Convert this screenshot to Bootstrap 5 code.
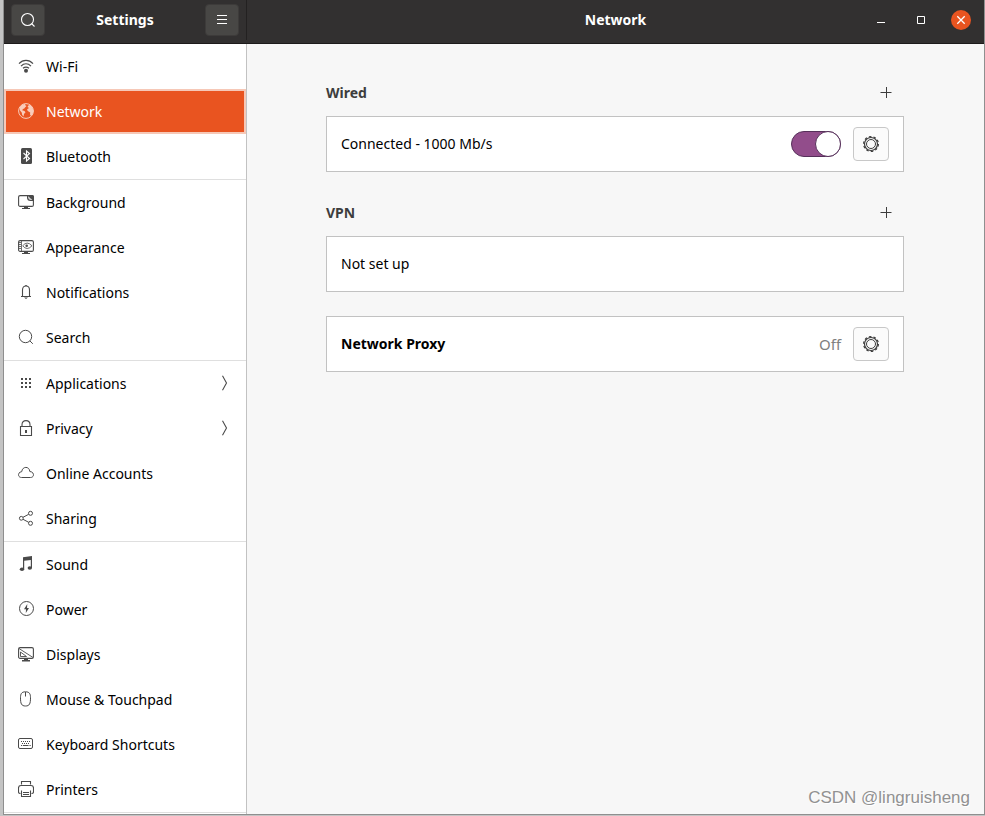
<!DOCTYPE html>
<html lang="en">
<head>
<meta charset="utf-8">
<meta name="viewport" content="width=device-width, initial-scale=1">
<title>Settings</title>
<link href="https://cdn.jsdelivr.net/npm/bootstrap@5.3.0/dist/css/bootstrap.min.css" rel="stylesheet">
<style>
  body { font-family: "Noto Sans", sans-serif; font-size: 14px; line-height: 20px; color: #000; background: #c4c4c4; }
  svg { display: block; flex-shrink: 0; }
  .desktop { padding: 0 1px 2px 4px; }
  .app-window { background: #f7f7f7; box-shadow: 0 0 0 1px #8f8f8f; }
  .titlebar { height: 44px; background: #323030; border-bottom: 1px solid #1d1b1b; color: #fff; padding-bottom: 3px; }
  .titlebar h1, .panel h2 { font-size: 14px; line-height: 20px; font-weight: 700; }
  .side { width: 243px; border-right: 1px solid #c2c2c2; }
  .titlebar .side { border-right-color: #232121; padding: 0 7px; }
  .tool-btn { width: 34px; height: 32px; background: #484745; border: 1px solid #3d3b3a; border-radius: 4px; color: #fff; }
  .win-controls { padding-right: 3px; }
  .win-btn { width: 40px; height: 40px; color: #fff; }
  .close-dot { width: 20px; height: 20px; background: #e95420; }
  .side-row { height: 45px; padding: 0 18px 1px 14px; gap: 12px; color: #000; text-decoration: none; }
  .side-row span { padding-top: 2px; }
  .side-row svg { color: #4a4a4a; }
  .side-row.current { background: #e95420; color: #fff; border: 2px solid #f6c8b7; padding: 0 16px 1px 12px; }
  .side-row.current svg { color: #f9cdbb; }
  .side-row.group-end { height: 46px; border-bottom: 1px solid #dfdfdf; }
  .panel { padding: 25px 80px 24px 79px; }
  .section-head { height: 47px; color: #3d3d3d; }
  .vpn { margin-top: 17px; }
  .add-btn { width: 36px; height: 35px; color: #3d3d3d; }
  .setting { height: 56px; padding: 0 14px; background: #fff; border: 1px solid #c2c2c2; gap: 12px; }
  .state { color: #808080; font-size: 15px; }
  .gear-btn { width: 36px; height: 34px; background: #fbfbfb; border: 1px solid #c8c8c8; border-radius: 4px; color: #3d3d3d; }
  .toggle { appearance: none; width: 50px; height: 26px; border-radius: 13px; background: #924d8b; border: 1px solid #56305a; display: flex; justify-content: flex-end; cursor: pointer; }
  .toggle::before { content: ""; width: 26px; height: 26px; margin: -1px -1px 0 0; border-radius: 50%; background: #fff; border: 1px solid #56305a; }
  .toggle:not(:checked) { background: #ddd; justify-content: flex-start; }
  .watermark { right: 14px; bottom: 6px; font: 17px/20px "Liberation Sans", sans-serif; color: #919191; text-shadow: 1px 1px 0 #fff; }
</style>
<script src="https://cdn.jsdelivr.net/npm/bootstrap@5.3.0/dist/js/bootstrap.bundle.min.js"></script>
</head>
<body>
<div class="desktop d-flex min-vh-100">
<div class="app-window d-flex flex-column flex-grow-1 position-relative">
  <header class="titlebar d-flex">
    <div class="side d-flex align-items-center justify-content-between flex-shrink-0">
      <button class="tool-btn d-flex align-items-center justify-content-center p-0" type="button" aria-label="Search settings">
        <svg width="16" height="16" fill="none" stroke="currentColor" stroke-width="1.1"><circle cx="7.5" cy="7.5" r="6"/><path d="M11.5 11.5l3 3"/></svg>
      </button>
      <h1 class="m-0">Settings</h1>
      <button class="tool-btn d-flex align-items-center justify-content-center p-0" type="button" aria-label="Menu">
        <svg width="16" height="16" stroke="currentColor"><path d="M3 3.5h10M3 7.5h10M3 11.5h10"/></svg>
      </button>
    </div>
    <div class="win-controls d-flex flex-grow-1 align-items-center justify-content-end position-relative">
      <h1 class="m-0 position-absolute start-50 translate-middle-x">Network</h1>
      <button class="win-btn btn p-0 border-0 d-flex align-items-center justify-content-center" type="button" aria-label="Minimize"><svg width="10" height="10" stroke="currentColor"><path d="M1 7.500h8"/></svg></button>
      <button class="win-btn btn p-0 border-0 d-flex align-items-center justify-content-center" type="button" aria-label="Maximize"><svg width="10" height="10" fill="none" stroke="currentColor"><path d="M1.500 1.500h7v7h-7z"/></svg></button>
      <button class="win-btn btn p-0 border-0 d-flex align-items-center justify-content-center" type="button" aria-label="Close"><span class="close-dot rounded-circle d-flex align-items-center justify-content-center"><svg width="10" height="10" stroke="currentColor" stroke-width="1.3"><path d="M1.300 1.300l7.400 7.400M8.700 1.300l-7.400 7.400"/></svg></span></button>
    </div>
  </header>

  <div class="d-flex flex-grow-1">
    <nav class="side bg-white flex-shrink-0" aria-label="Settings categories">
      <a href="#" class="side-row d-flex align-items-center">
        <svg width="16" height="16" fill="none" stroke="currentColor" stroke-width="1.200"><path d="M1 5.600C5 1.300 11 1.300 15 5.600M3 8.100c3-3 7-3 10 0M5 10.300c2-1.700 4-1.700 6 0"/><circle cx="8" cy="12.800" r="2" fill="currentColor" stroke="none"/></svg>
        <span>Wi-Fi</span></a>
      <a href="#" class="side-row current d-flex align-items-center" aria-current="page">
        <svg width="16" height="16" fill="none" stroke="currentColor"><circle cx="8" cy="8" r="7.400"/><path fill="currentColor" stroke="none" d="M1.500 4.500L4 1.800 7.500.7 7 2 8.500 3 7 4.500 6.300 5.500 5 6 4.200 7.200 6.500 8 7.500 9.300 6 11 5.500 13.500 4.200 12 3.700 9.500 2 7.500zM9.500 4l1-1.800L12.500 2l2 2.600 1 3.400-.8 3-1.700 2-1-1.500.2-2-1.700-1-1.500-1.500L9.500 6l1.500-1z"/></svg>
        <span>Network</span></a>
      <a href="#" class="side-row group-end d-flex align-items-center">
        <svg width="16" height="16"><rect x="3" width="11" height="16" rx="1.500" fill="currentColor"/><path d="M5.500 5l6 5.500L8.500 13V3l3 2.500-6 5.500" fill="none" stroke="#fff" stroke-width="1.100"/></svg>
        <span>Bluetooth</span></a>

      <a href="#" class="side-row d-flex align-items-center">
        <svg width="16" height="16" fill="none" stroke="currentColor" stroke-width="1.100"><rect x=".6" y="1.600" width="14.800" height="10.800" rx="1.500"/><path d="M9 1h5q2 0 2 2v4h-3.500Q9 7 9 3.500z" fill="currentColor" stroke="none"/><path d="M10.300 2.300v1.200q0 2.300 2.200 2.300h1.800l-1.500-1.300h-1.300V3.200z" fill="#fff" stroke="none"/><path d="M6 12.500h4V14h2v1H4v-1h2z" fill="currentColor" stroke="none"/></svg>
        <span>Background</span></a>
      <a href="#" class="side-row d-flex align-items-center">
        <svg width="16" height="16" fill="none" stroke="currentColor"><rect x=".6" y="1.600" width="14.800" height="10.800" rx="1.500" stroke-width="1.100"/><path d="M3.500 1.500v11M1 3.500h2M1 5.500h2M1 7.500h2M1 9.500h2" stroke-width=".8"/><path d="M4.700 6.800q4.300-5.400 9.300 0-5 5.400-9.300 0z" stroke-width=".8"/><circle cx="8.700" cy="6.800" r="1.300" fill="currentColor" stroke="none"/><path d="M6 12.500h4V14h2v1H4v-1h2z" fill="currentColor" stroke="none"/></svg>
        <span>Appearance</span></a>
      <a href="#" class="side-row d-flex align-items-center">
        <svg width="16" height="16" fill="none" stroke="currentColor" stroke-width="1.100"><path d="M3 12.500h10M4.500 12.300V6q0-4 3.500-4t3.500 4v6.300M7.200 1.500h1.600"/><path d="M6 13.500h4L8 15z" fill="currentColor" stroke="none"/></svg>
        <span>Notifications</span></a>
      <a href="#" class="side-row group-end d-flex align-items-center">
        <svg width="16" height="16" fill="none" stroke="currentColor"><circle cx="7.500" cy="7.500" r="6.200"/><path d="M11.800 11.800l3 3"/></svg>
        <span>Search</span></a>

      <a href="#" class="side-row d-flex align-items-center">
        <svg width="16" height="16" fill="currentColor"><path d="M3 3h2v2H3zM7 3h2v2H7zM11 3h2v2h-2zM3 7h2v2H3zM7 7h2v2H7zM11 7h2v2h-2zM3 11h2v2H3zM7 11h2v2H7zM11 11h2v2h-2z"/></svg>
        <span>Applications</span>
        <svg class="ms-auto" width="7" height="16" fill="none" stroke="currentColor" stroke-width="1.100"><path d="M1.500.8l4 7.200-4 7.200"/></svg></a>
      <a href="#" class="side-row d-flex align-items-center">
        <svg width="16" height="16" fill="none" stroke="currentColor" stroke-width="1.100"><path d="M2.500 6.500h11v9h-11zM4 6.500V4.700C4 2.200 5.500.6 8 .6s4 1.600 4 4.100v1.800"/><path d="M7 10h2v3H7z" fill="currentColor" stroke="none"/></svg>
        <span>Privacy</span>
        <svg class="ms-auto" width="7" height="16" fill="none" stroke="currentColor" stroke-width="1.100"><path d="M1.500.8l4 7.200-4 7.200"/></svg></a>
      <a href="#" class="side-row d-flex align-items-center">
        <svg width="16" height="16" fill="none" stroke="currentColor"><path d="M3.500 12.500C-.5 12.500-.5 7 3.700 6.700 4.300 1 11.500 1 11.800 6.500c4.800.3 4.800 6 .7 6z"/></svg>
        <span>Online Accounts</span></a>
      <a href="#" class="side-row group-end d-flex align-items-center">
        <svg width="16" height="16" fill="none" stroke="currentColor"><circle cx="3.300" cy="8.300" r="1.900"/><circle cx="12.500" cy="3.300" r="2"/><circle cx="12.500" cy="13.300" r="2"/><path d="M5 7.300l5.700-3M5 9.300l5.700 3"/></svg>
        <span>Sharing</span></a>

      <a href="#" class="side-row d-flex align-items-center">
        <svg width="16" height="16" fill="currentColor"><path d="M5 1.300L14 0v12h-1.200V4L6.200 4.800V13H5z"/><ellipse cx="4" cy="13.300" rx="2.200" ry="1.800"/><ellipse cx="11.800" cy="12" rx="2.200" ry="1.800"/></svg>
        <span>Sound</span></a>
      <a href="#" class="side-row d-flex align-items-center">
        <svg width="16" height="16" fill="none" stroke="currentColor"><circle cx="8.500" cy="7.500" r="7"/><path d="M9.300 3L6 8.300h2L7.800 12 11 7H9z" fill="currentColor" stroke="none"/></svg>
        <span>Power</span></a>
      <a href="#" class="side-row d-flex align-items-center">
        <svg width="16" height="16" fill="none" stroke="currentColor"><rect x=".6" y="1.600" width="14.800" height="10.800" rx="1.500" stroke-width="1.100"/><path d="M1 2.500l14 9M2.500 6v4.500h6z" stroke-width=".9"/><path d="M6 12.500h4V14h2v1.500H4V14h2z" fill="currentColor" stroke="none"/></svg>
        <span>Displays</span></a>
      <a href="#" class="side-row d-flex align-items-center">
        <svg width="16" height="16" fill="none" stroke="currentColor"><path d="M7.500.8c4 0 5 2 5 6 0 6-1 8.200-5 8.200s-5-2.200-5-8.200c0-4 1-6 5-6zM7.500 1v4.500"/></svg>
        <span>Mouse &amp; Touchpad</span></a>
      <a href="#" class="side-row d-flex align-items-center">
        <svg width="16" height="16" fill="none" stroke="currentColor"><rect x=".5" y="2.500" width="14" height="10" rx="1.500"/><path d="M3 5.500h10M4 7.500h8" stroke-dasharray="1 1"/><path d="M3 9.500h1.200M5 9.500h5.500M11.500 9.500h1.200"/></svg>
        <span>Keyboard Shortcuts</span></a>
      <a href="#" class="side-row group-end d-flex align-items-center">
        <svg width="16" height="16" fill="none" stroke="currentColor" stroke-width="1.100"><path d="M3.500 3.500v-3h9v3M2.500 12.500Q.5 12.500.5 11V7q0-2.500 2.500-2.500h10q2.500 0 2.500 2.500v4q0 1.500-2 1.500M3.500 9.500v6h9v-6M5 11.500h6M5 13.500h6"/></svg>
        <span>Printers</span></a>
    </nav>

    <main class="panel flex-grow-1">
      <section>
        <div class="section-head d-flex align-items-center justify-content-between">
          <h2 class="m-0">Wired</h2>
          <button class="add-btn btn p-0 border-0 d-flex align-items-center justify-content-center" type="button" aria-label="Add wired connection"><svg width="12" height="13" stroke="currentColor"><path d="M.5 6.500h11M6.500 1v11"/></svg></button>
        </div>
        <div class="setting d-flex align-items-center">
          <label class="flex-grow-1" for="wired">Connected - 1000 Mb/s</label>
          <input class="toggle m-0" type="checkbox" role="switch" id="wired" checked>
          <button class="gear-btn d-flex align-items-center justify-content-center p-0" type="button" aria-label="Wired options">
            <svg width="16" height="16" fill="none" stroke="currentColor"><circle cx="8" cy="8" r="4.500"/><circle cx="8" cy="8" r="6.500" stroke-width="1.200"/><circle cx="8" cy="8" r="7.400" stroke-width="1.200" stroke-dasharray="2.500 2.150"/></svg>
          </button>
        </div>
      </section>
      <section class="vpn">
        <div class="section-head d-flex align-items-center justify-content-between">
          <h2 class="m-0">VPN</h2>
          <button class="add-btn btn p-0 border-0 d-flex align-items-center justify-content-center" type="button" aria-label="Add VPN"><svg width="12" height="13" stroke="currentColor"><path d="M.5 6.500h11M6.500 1v11"/></svg></button>
        </div>
        <div class="setting d-flex align-items-center">Not set up</div>
      </section>
      <section class="setting d-flex align-items-center mt-4">
        <h2 class="m-0 flex-grow-1">Network Proxy</h2>
        <span class="state">Off</span>
        <button class="gear-btn d-flex align-items-center justify-content-center p-0" type="button" aria-label="Proxy options">
          <svg width="16" height="16" fill="none" stroke="currentColor"><circle cx="8" cy="8" r="4.500"/><circle cx="8" cy="8" r="6.500" stroke-width="1.200"/><circle cx="8" cy="8" r="7.400" stroke-width="1.200" stroke-dasharray="2.500 2.150"/></svg>
        </button>
      </section>
    </main>
  </div>
  <div class="watermark position-absolute">CSDN @lingruisheng</div>
</div>
</div>
</body>
</html>
